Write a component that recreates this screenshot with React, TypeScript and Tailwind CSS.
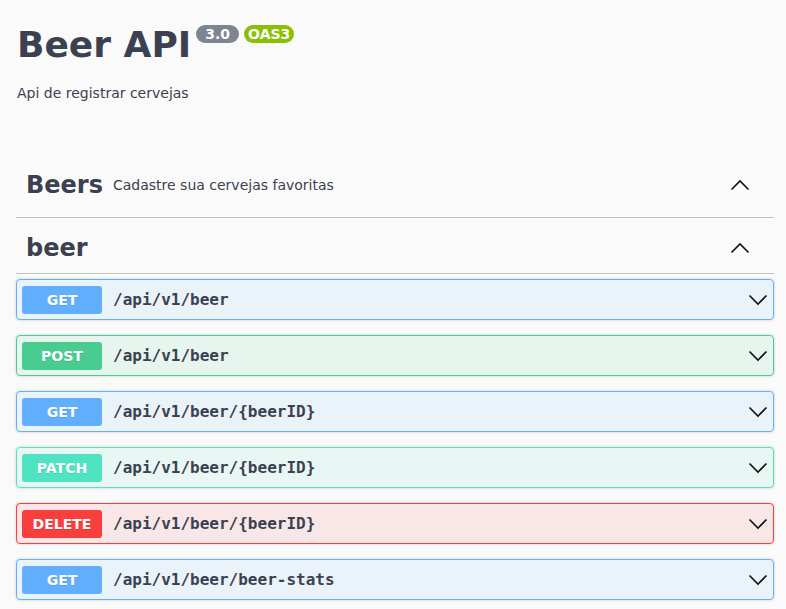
const ops = [
  { method: "GET", path: "/api/v1/beer", box: "border-[#61affe] bg-[rgba(97,175,254,0.1)]", badge: "bg-[#61affe]" },
  { method: "POST", path: "/api/v1/beer", box: "border-[#49cc90] bg-[rgba(73,204,144,0.1)]", badge: "bg-[#49cc90]" },
  { method: "GET", path: "/api/v1/beer/{beerID}", box: "border-[#61affe] bg-[rgba(97,175,254,0.1)]", badge: "bg-[#61affe]" },
  { method: "PATCH", path: "/api/v1/beer/{beerID}", box: "border-[#50e3c2] bg-[rgba(80,227,194,0.1)]", badge: "bg-[#50e3c2]" },
  { method: "DELETE", path: "/api/v1/beer/{beerID}", box: "border-[#f93e3e] bg-[rgba(249,62,62,0.1)]", badge: "bg-[#f93e3e]" },
  { method: "GET", path: "/api/v1/beer/beer-stats", box: "border-[#61affe] bg-[rgba(97,175,254,0.1)]", badge: "bg-[#61affe]" },
];

function ChevronUp() {
  return (
    <svg width="20" height="12" viewBox="0 0 20 12" fill="none">
      <polyline points="1.5,10.5 10,2 18.5,10.5" stroke="#111" strokeWidth="1.6" />
    </svg>
  );
}

function ChevronDown() {
  return (
    <svg width="20" height="12" viewBox="0 0 20 12" fill="none">
      <polyline points="1.5,1.5 10,10 18.5,1.5" stroke="#111" strokeWidth="1.6" />
    </svg>
  );
}

export default function App() {
  return (
    <div className="min-h-screen bg-[#fafafa] pl-4 pr-3 text-[#3b4151] font-['DejaVu_Sans',sans-serif]">
      {/* info */}
      <div className="flex items-start pt-[24px] pl-px">
        <h2 className="text-[36px] font-bold leading-[42px]">Beer API</h2>
        <span className="ml-[5px] mt-[1px] h-[18px] w-[43px] rounded-full bg-[#7d8492] text-center text-[14px] font-bold leading-[18px] text-white">
          3.0
        </span>
        <span className="ml-[5px] mt-[1px] h-[18px] w-[50px] rounded-full bg-[#89bf04] text-center text-[14px] font-bold leading-[18px] text-white">
          OAS3
        </span>
      </div>
      <p className="mt-[19px] pl-px text-[14px] leading-[16px]">Api de registrar cervejas</p>

      {/* tags */}
      <div className="mt-[58px] flex h-[59px] items-center border-b border-[rgba(59,65,81,0.3)] pb-[6px] pl-[10px] pr-[24px]">
        <h3 className="text-[24px] font-bold leading-[28px]">Beers</h3>
        <span className="flex-1 px-[10px] text-[14px] leading-[16px]">Cadastre sua cervejas favoritas</span>
        <ChevronUp />
      </div>
      <div className="mt-[5px] flex h-[51px] items-center border-b border-[rgba(59,65,81,0.3)] pl-[10px] pr-[24px]">
        <h3 className="flex-1 text-[24px] font-bold leading-[28px]">beer</h3>
        <ChevronUp />
      </div>

      <div className="mt-[5px] flex flex-col gap-[15px] pb-4">
        {ops.map((op, i) => (
          <div
            key={i}
            className={`flex h-[41px] items-center rounded border pl-[5px] pr-[5px] shadow-[0_0_3px_rgba(0,0,0,0.19)] ${op.box}`}
          >
            <span
              className={`h-[28px] w-[80px] rounded-[3px] text-center text-[14px] font-bold leading-[28px] text-white [text-shadow:0_1px_0_rgba(0,0,0,0.1)] ${op.badge}`}
            >
              {op.method}
            </span>
            <span className="flex-1 pl-[11px] font-['DejaVu_Sans_Mono',monospace] text-[16px] font-bold leading-[20px]">
              {op.path}
            </span>
            <ChevronDown />
          </div>
        ))}
      </div>
    </div>
  );
}
